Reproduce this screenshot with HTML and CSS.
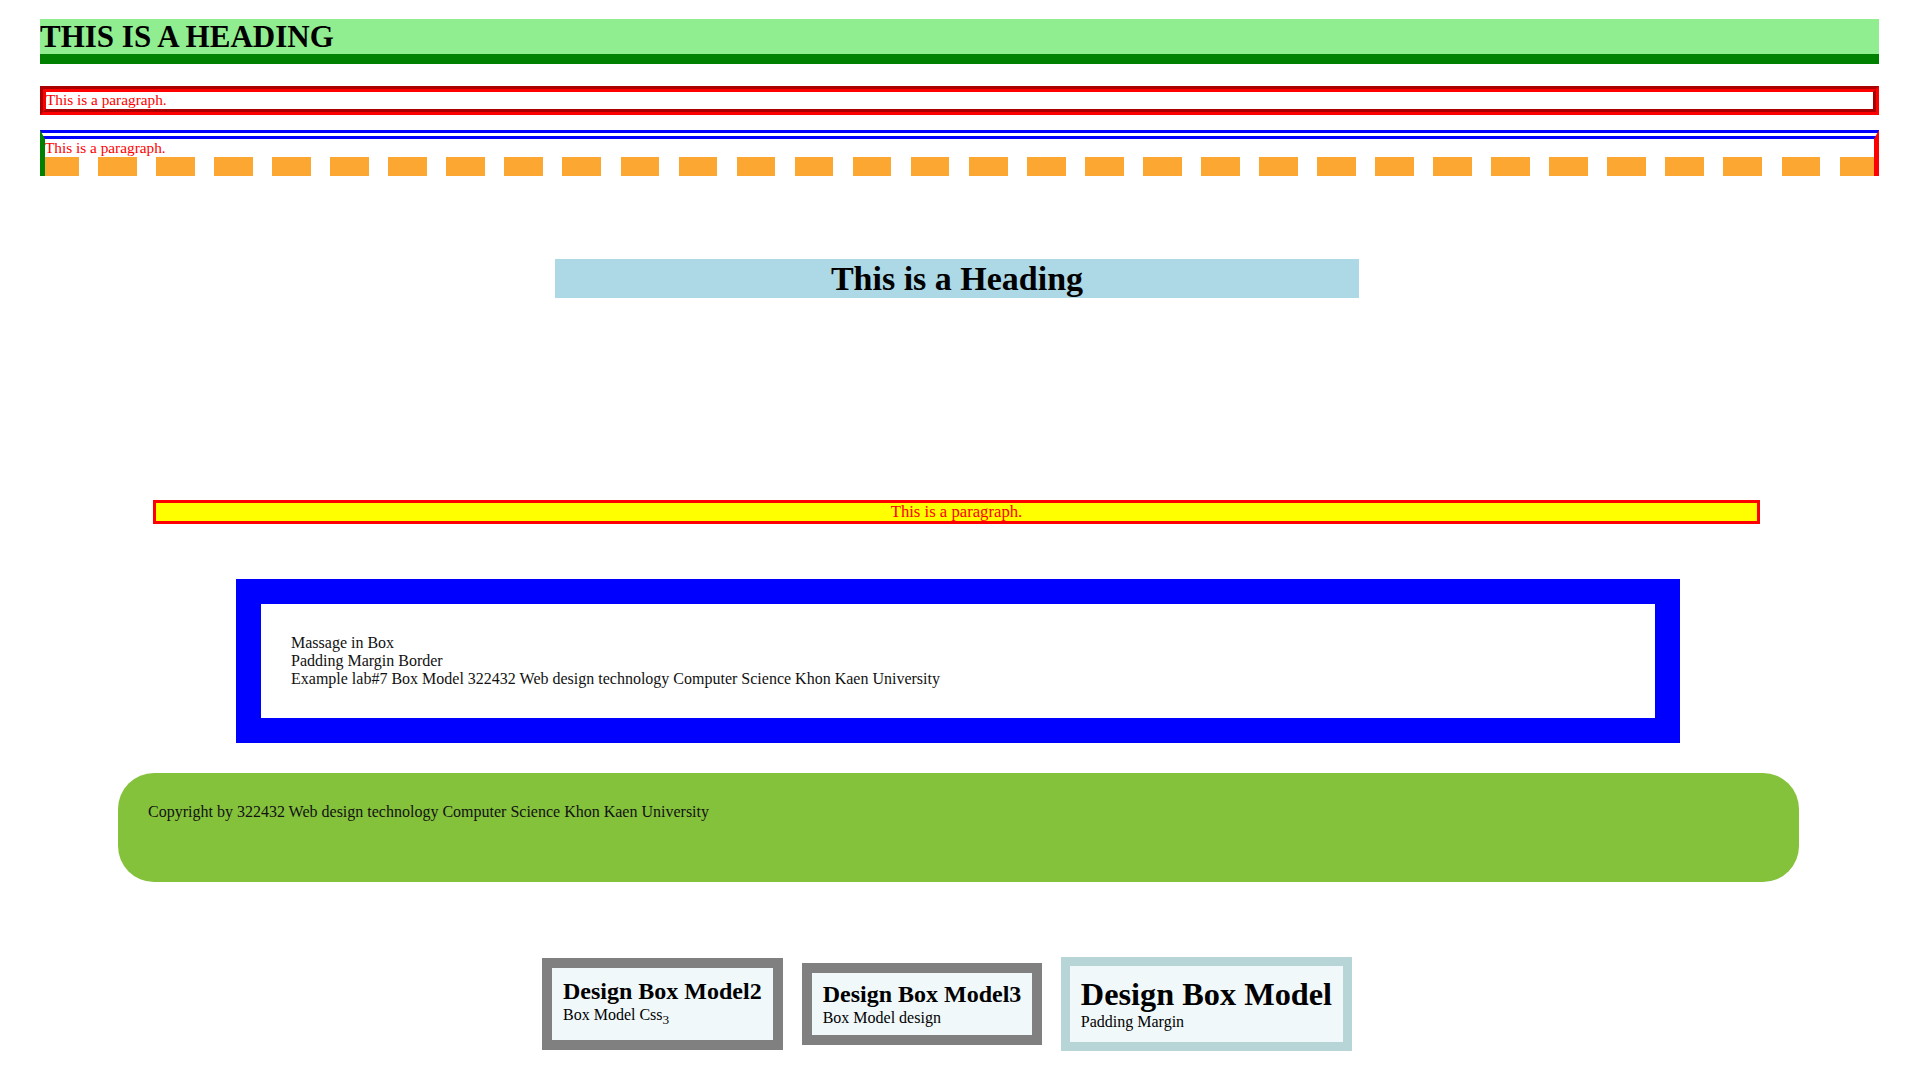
FILE: index.html
```
<!DOCTYPE html>
<html>
<head>
<meta charset="utf-8">
<title>Box Model</title>
<link rel="stylesheet" href="styles.css">
</head>
<body>
<div class="page">
  <h1 class="top-heading">THIS IS A HEADING</h1>
  <p class="para-red">This is a paragraph.</p>
  <p class="para-multi">This is a paragraph.</p>
  <h2 class="center-heading">This is a Heading</h2>
  <p class="para-yellow">This is a paragraph.</p>
  <div class="blue-box">
    Massage in Box<br>
    Padding Margin Border<br>
    Example lab#7 Box Model 322432 Web design technology Computer Science Khon Kaen University
  </div>
  <footer class="footer">Copyright by 322432 Web design technology Computer Science Khon Kaen University</footer>
  <div class="cards">
    <div class="card card-gray">
      <h2 class="card-title">Design Box Model2</h2>
      <p class="card-sub">Box Model Css<sub>3</sub></p>
    </div>
    <div class="card card-gray card-thin">
      <h2 class="card-title">Design Box Model3</h2>
      <p class="card-sub">Box Model design</p>
    </div>
    <div class="card card-teal">
      <h2 class="card-title card-title-big">Design Box Model</h2>
      <p class="card-sub">Padding Margin</p>
    </div>
  </div>
</div>
</body>
</html>
```
FILE: styles.css
```
html, body {
  margin: 0;
  padding: 0;
  background: #ffffff;
}

body {
  font-family: "Liberation Serif", "Times New Roman", serif;
  color: #000;
}

.page {
  padding: 19px 41px 40px 40px;
}

.top-heading {
  margin: 0;
  font-size: 31px;
  line-height: 35px;
  font-weight: bold;
  background: #90ee90;
  border-bottom: 10px solid #008000;
}

.para-red {
  margin: 22px 0 0 0;
  font-size: 15.3px;
  line-height: 16.5px;
  color: #ff0000;
  border: 6px groove #ff0000;
}

.para-multi {
  margin: 15.5px 0 0 0;
  padding-bottom: 19.5px;
  font-size: 15.3px;
  line-height: 17.5px;
  color: #ff0000;
  border-top: 9px double #0000ff;
  border-left: 5px solid #008000;
  border-right: 5px solid #ff0000;
  background-image: repeating-linear-gradient(to right, #fda733 0, #fda733 38.7px, transparent 38.7px, transparent 58.05px);
  background-size: 100% 19.5px;
  background-position: left bottom;
  background-repeat: no-repeat;
  background-origin: border-box;
  background-clip: border-box;
}

.center-heading {
  margin: 83px 0 0 515px;
  width: 804px;
  font-size: 34px;
  line-height: 39px;
  font-weight: bold;
  text-align: center;
  background: #add8e6;
}

.para-yellow {
  margin: 201.5px 119px 0 113px;
  font-size: 16.7px;
  line-height: 18.5px;
  text-align: center;
  color: #ff0000;
  background: #ffff00;
  border: 3px solid #ff0000;
}

.blue-box {
  margin: 54.5px 199px 0 196px;
  padding: 30px;
  font-size: 16px;
  line-height: 18.3px;
  border: 25px solid #0000ff;
  color: #111;
}

.footer {
  margin: 29.5px 80px 0 78px;
  height: 109px;
  box-sizing: border-box;
  padding: 30px;
  font-size: 16px;
  line-height: 18.4px;
  background: #85c23c;
  border-radius: 36px;
  color: #111;
}

.cards {
  display: flex;
  align-items: center;
  gap: 19px;
  margin-top: 75.5px;
  padding-left: 502px;
}

.card {
  padding: 10px 11px;
  background: #f1f8fa;
}

.card-gray {
  border: 10px solid #808080;
}

.card-thin {
  padding: 8px 11px;
}

.card-teal {
  border: 9px solid #b7d5d6;
  padding: 10px 10.5px;
}

.card-title {
  margin: 0;
  font-size: 24px;
  line-height: 27.6px;
  font-weight: bold;
}

.card-title-big {
  font-size: 32.3px;
  line-height: 36.8px;
}

.card-sub {
  margin: 0;
  font-size: 16px;
  line-height: 18.4px;
}
```
